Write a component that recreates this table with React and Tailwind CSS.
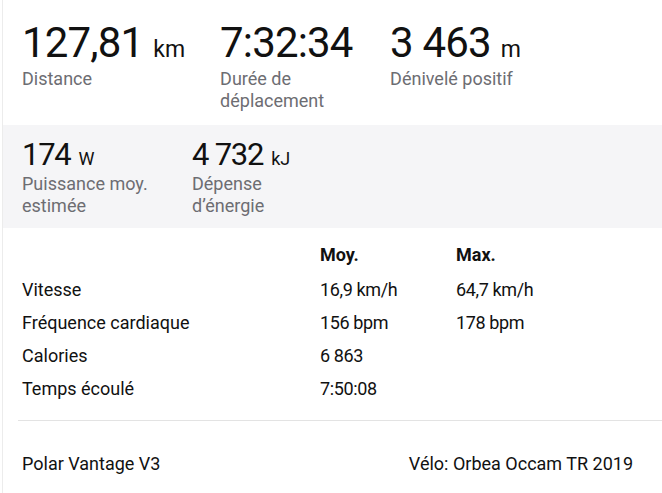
export default function App() {
  const top = [
    { v: "127,81", u: "km", l: "Distance" },
    { v: "7:32:34", u: "", l: "Durée de déplacement" },
    { v: "3 463", u: "m", l: "Dénivelé positif" },
  ];
  const mid = [
    { v: "174", u: "W", l: "Puissance moy. estimée" },
    { v: "4 732", u: "kJ", l: "Dépense d’énergie" },
  ];
  const rows = [
    ["Vitesse", "16,9 km/h", "64,7 km/h"],
    ["Fréquence cardiaque", "156 bpm", "178 bpm"],
    ["Calories", "6 863", ""],
    ["Temps écoulé", "7:50:08", ""],
  ];
  return (
    <div className="ml-[2px] min-h-[493px] border-l border-[#ececec] bg-white font-['Roboto','Liberation_Sans',sans-serif] text-[#111]">
      <div className="flex h-[125px] gap-[35px] pl-[19px] pt-[22px]">
        {top.map((s) => (
          <div key={s.l} className="min-w-[135px]">
            <div className="flex h-[42px] items-baseline whitespace-nowrap leading-none">
              <span className="text-[42px] leading-[42px] tracking-[-0.02em]">{s.v}</span>
              {s.u && <span className="ml-[10px] text-[23px] leading-none">{s.u}</span>}
            </div>
            <div className="mt-[4px] max-w-[135px] text-[18px] leading-[22px] text-[#6d6d72]">{s.l}</div>
          </div>
        ))}
      </div>
      <div className="flex h-[103px] gap-[35px] bg-[#f5f5f7] pl-[19px] pt-[14px]">
        {mid.map((s) => (
          <div key={s.l} className="min-w-[135px]">
            <div className="flex h-[31px] items-baseline whitespace-nowrap leading-none">
              <span className="text-[31px] leading-[31px] tracking-[-0.04em]">{s.v}</span>
              <span className="ml-[8px] text-[18px] leading-none">{s.u}</span>
            </div>
            <div className="mt-[3px] max-w-[135px] text-[18px] leading-[22px] text-[#6d6d72]">{s.l}</div>
          </div>
        ))}
      </div>
      <div className="grid grid-cols-[298px_136px_1fr] gap-y-[11px] pl-[19px] pt-[16px] text-[18px] leading-[22px]">
        <div className="mb-[2px]" />
        <div className="mb-[2px] font-bold">Moy.</div>
        <div className="mb-[2px] font-bold">Max.</div>
        {rows.map((r) => (
          <div key={r[0]} className="contents">
            <div>{r[0]}</div>
            <div className="tracking-[-0.02em]">{r[1]}</div>
            <div className="tracking-[-0.02em]">{r[2]}</div>
          </div>
        ))}
      </div>
      <div className="ml-[15px] mt-[20px] border-t border-[#e3e3e3]" />
      <div className="flex justify-between pl-[19px] pr-[29px] pt-[32px] text-[18px] leading-[22px]">
        <span>Polar Vantage V3</span>
        <span>Vélo: Orbea Occam TR 2019</span>
      </div>
    </div>
  );
}
